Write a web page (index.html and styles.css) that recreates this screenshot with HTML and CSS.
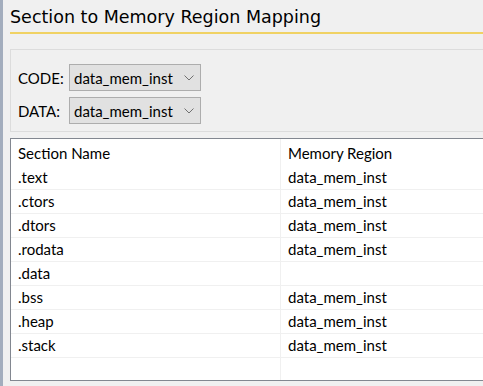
FILE: index.html
```html
<!DOCTYPE html>
<html lang="en">
<head>
  <meta charset="UTF-8">
  <title>Section to Memory Region Mapping</title>
  <link rel="stylesheet" href="styles.css">
</head>
<body>
  <div class="edge"></div>
  <div class="page">
    <h1 class="title">Section to Memory Region Mapping</h1>

    <div class="regions">
      <div class="field">
        <label for="code-select">CODE:</label>
        <div class="combo" id="code-select">
          <span>data_mem_inst</span>
          <svg width="10" height="6" viewBox="0 0 10 6"><path d="M0.5 0.5 L5 5 L9.5 0.5" fill="none" stroke="#707070" stroke-width="1"/></svg>
        </div>
      </div>
      <div class="field">
        <label for="data-select">DATA:</label>
        <div class="combo" id="data-select">
          <span>data_mem_inst</span>
          <svg width="10" height="6" viewBox="0 0 10 6"><path d="M0.5 0.5 L5 5 L9.5 0.5" fill="none" stroke="#707070" stroke-width="1"/></svg>
        </div>
      </div>
    </div>

    <div class="mapping">
      <div class="row head">
        <div class="cell">Section Name</div>
        <div class="cell">Memory Region</div>
      </div>
      <div class="row"><div class="cell">.text</div><div class="cell">data_mem_inst</div></div>
      <div class="row"><div class="cell">.ctors</div><div class="cell">data_mem_inst</div></div>
      <div class="row"><div class="cell">.dtors</div><div class="cell">data_mem_inst</div></div>
      <div class="row"><div class="cell">.rodata</div><div class="cell">data_mem_inst</div></div>
      <div class="row"><div class="cell">.data</div><div class="cell"></div></div>
      <div class="row"><div class="cell">.bss</div><div class="cell">data_mem_inst</div></div>
      <div class="row"><div class="cell">.heap</div><div class="cell">data_mem_inst</div></div>
      <div class="row"><div class="cell">.stack</div><div class="cell">data_mem_inst</div></div>
      <div class="row filler"><div class="cell"></div><div class="cell"></div></div>
    </div>
  </div>
</body>
</html>
```

FILE: styles.css
```css
/* Base */
* {
  margin: 0;
  padding: 0;
  box-sizing: border-box;
}

body {
  display: flex;
  height: 386px;
  overflow: hidden;
  background-color: #f0f0f0;
  color: #000;
  font-family: Lato, 'Noto Sans', sans-serif;
  font-size: 15px;
}

.edge {
  width: 3px;
  flex-shrink: 0;
  background-color: #a3adbd;
}

.page {
  flex: 1;
  padding-left: 7px;
  min-width: 0;
}

/* Title */
.title {
  font-family: 'DejaVu Sans', Verdana, sans-serif;
  font-weight: normal;
  font-size: 17.5px;
  line-height: 22px;
  padding-top: 6px;
  height: 34px;
  border-bottom: 2px solid #f0d264;
  margin-bottom: 15px;
}

/* Combo panel */
.regions {
  border-top: 1px solid #dcdcdc;
  border-left: 1px solid #dcdcdc;
  border-bottom: 1px solid #dcdcdc;
  padding: 14px 0 6px 7px;
  height: 83px;
}

.field {
  display: flex;
  align-items: center;
  margin-bottom: 6px;
}

.field label {
  width: 51px;
}

.combo {
  width: 132px;
  height: 27px;
  display: flex;
  align-items: center;
  justify-content: space-between;
  padding: 0 6px 0 4px;
  background-color: #e1e1e1;
  border: 1px solid #adadad;
}

/* Table */
.mapping {
  margin-top: 6px;
  background-color: #fff;
  border: 1px solid #828790;
  border-right: none;
  height: 243px;
  display: flex;
  flex-direction: column;
}

.row {
  display: flex;
  height: 24px;
  border-bottom: 1px solid #f0f0f0;
}

.row.head {
  height: 27px;
  border-bottom: none;
}

.row.filler {
  flex: 1;
  border-bottom: none;
}

.cell {
  line-height: 23px;
  padding-left: 7px;
}

.cell:first-child {
  width: 270px;
  border-right: 1px solid #f0f0f0;
}

.head .cell {
  line-height: 28px;
}
```
